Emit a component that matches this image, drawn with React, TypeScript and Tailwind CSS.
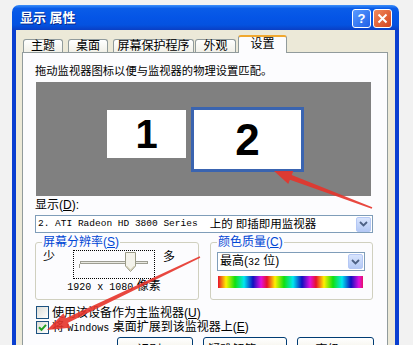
import { type FC, type ReactNode } from 'react'

const Key: FC<{ k: string }> = ({ k }) => (
  <span>
    (<span className="underline">{k}</span>)
  </span>
)

interface TabProps {
  label: string
  className: string
  active?: boolean
}

const Tab: FC<TabProps> = ({ label, className, active }) => {
  if (active) {
    return (
      <div
        className={`relative z-10 -mb-px h-[18px] border border-b-0 border-[#919b9c] border-t-2 border-t-[#f0a830] rounded-t-[3px] bg-[#fcfcfe] text-center text-[12px] leading-[13px] pt-[1px] ${className}`}
      >
        {label}
      </div>
    )
  }
  return (
    <div
      className={`h-[13px] border border-b-0 border-[#919b9c] rounded-t-[3px] bg-[linear-gradient(180deg,#ffffff,#f1f0e8)] text-center text-[12px] leading-[12px] ${className}`}
    >
      {label}
    </div>
  )
}

const ComboButton: FC = () => (
  <div className="w-[15px] h-[15px] rounded-[2px] border border-[#b5c8f5] bg-[linear-gradient(180deg,#d8e4fd,#b4c9f5)] flex items-center justify-center">
    <svg width="9" height="6" viewBox="0 0 9 6">
      <path d="M1 1 L4.5 4.5 L8 1" fill="none" stroke="#4d6185" strokeWidth="1.8" />
    </svg>
  </div>
)

const CheckBox: FC<{ checked?: boolean; children: ReactNode }> = ({ checked, children }) => (
  <div className="flex items-center h-[15px]">
    <div className="ml-[1px] w-[13px] h-[13px] border border-[#1c5180] bg-[linear-gradient(135deg,#dcdcd7,#ffffff)] flex items-center justify-center">
      {checked && (
        <svg width="9" height="9" viewBox="0 0 9 9">
          <path d="M1 4.2 L3.5 6.8 L8 1.8" fill="none" stroke="#21a121" strokeWidth="2" />
        </svg>
      )}
    </div>
    <span className="ml-[3px] text-[12px] leading-[14px]">{children}</span>
  </div>
)

const XpButton: FC<{ label: ReactNode; className: string }> = ({ label, className }) => (
  <div
    className={`h-[23px] rounded-[3px] border border-[#003c74] bg-[linear-gradient(180deg,#ffffff,#ece9d8)] text-center text-[12px] leading-[14px] pt-[5px] ${className}`}
  >
    {label}
  </div>
)

export default function App() {
  return (
    <div className="relative w-[413px] h-[345px] overflow-hidden bg-[#f2f2f2] pt-[5px] pl-[12px] font-['Liberation_Sans','Noto_Sans_CJK_SC',sans-serif] text-black">
      <div className="w-[387px] flex flex-col">
        {/* title bar */}
        <div className="h-[25px] rounded-t-[7px] bg-[linear-gradient(180deg,#3c8ffa_0%,#0a5ce8_14%,#0555e6_50%,#0452e0_80%,#0a3fc4_100%)] flex items-center justify-between pl-[8px] pr-[7px]">
          <span className="text-white font-bold text-[13px] leading-[15px] [text-shadow:1px_1px_0_#0a2a8a]">
            显示 属性
          </span>
          <div className="flex gap-[2px] mt-[2px]">
            <div className="w-[19px] h-[19px] rounded-[3px] border border-white bg-[linear-gradient(135deg,#5a9bff,#1f60e8)] flex items-center justify-center text-white font-bold text-[13px] leading-[13px]">
              ?
            </div>
            <div className="w-[19px] h-[19px] rounded-[3px] border border-white bg-[linear-gradient(135deg,#f08a5e,#d4431c)] flex items-center justify-center">
              <svg width="11" height="11" viewBox="0 0 11 11">
                <path d="M1.5 1.5 L9.5 9.5 M9.5 1.5 L1.5 9.5" stroke="#fff" strokeWidth="2" />
              </svg>
            </div>
          </div>
        </div>

        {/* body */}
        <div className="h-[400px] border-x-4 border-[#0a3fd0] bg-[#ece9d8] pl-[6px] pr-[7px] flex flex-col">
          <div className="h-[22px] flex items-end pl-[1px]">
            <Tab label="主题" className="w-[40px]" />
            <Tab label="桌面" className="ml-[5px] w-[40px]" />
            <Tab label="屏幕保护程序" className="ml-[5px] w-[81px]" />
            <Tab label="外观" className="ml-[1px] w-[41px]" />
            <Tab label="设置" className="ml-[2px] w-[49px]" active />
          </div>

          <div className="flex-1 border border-[#919b9c] bg-[#fcfcfe] pl-[12px] pr-[13px] pt-[11px] flex flex-col">
            <div className="text-[11.3px] leading-[14px]">拖动监视器图标以便与监视器的物理设置匹配。</div>

            {/* monitor arrangement */}
            <div className="mt-[4px] ml-[1px] w-[335px] h-[114px] bg-[#808080] flex items-start pl-[71px] pt-[25px]">
              <div className="mt-[3px] w-[79px] h-[48px] bg-white flex items-center justify-center font-['Liberation_Sans',sans-serif] font-bold text-[40px] leading-none">
                1
              </div>
              <div className="ml-[5px] w-[113px] h-[65px] bg-white border-[3px] border-[#3a64b0] flex items-center justify-center font-['Liberation_Sans',sans-serif] font-bold text-[44px] leading-none">
                2
              </div>
            </div>

            <div className="mt-[2px] text-[12px] leading-[14px]">
              显示<Key k="D" />:
            </div>

            <div className="mt-[3px] w-[338px] h-[18px] border border-[#7f9db9] bg-white flex items-center pl-[2px] pr-[1px]">
              <span className="font-['Liberation_Mono',monospace] text-[9.5px] leading-[14px]">2. ATI Radeon HD 3800 Series</span>
              <span className="ml-[12px] text-[11.5px] leading-[14px]">上的 即插即用监视器</span>
              <div className="ml-auto">
                <ComboButton />
              </div>
            </div>

            {/* groups */}
            <div className="mt-[3px] flex gap-[11px]">
              <fieldset className="w-[164px] h-[64px] border border-[#d0d0bf] rounded-[3px]">
                <legend className="ml-[6px] px-[1px] text-[12px] leading-[13px] text-[#0046d5]">
                  屏幕分辨率<Key k="S" />
                </legend>
                <div className="flex items-start pl-[7px] pt-[1px]">
                  <span className="mt-[1px] text-[12px] leading-[12px]">少</span>
                  <div className="relative ml-[18px] w-[82px] h-[29px] border border-dotted border-black">
                    <div className="absolute top-[10px] left-[6px] w-[68px] h-[3px] border border-[#9d9d92] bg-[#e8e8e0]" />
                    <div className="absolute top-[13px] left-[5px] w-[1px] h-[4px] bg-[#9d9d92]" />
                    <svg className="absolute top-[1px] left-[51px]" width="11" height="20" viewBox="0 0 11 20">
                      <path d="M0.5 0.5 H10.5 V14 L5.5 19.5 L0.5 14 Z" fill="#f3f2ea" stroke="#9a9a86" />
                      <path d="M1.5 14 L5.5 18.2 L9.5 14" fill="none" stroke="#c9c2a0" />
                    </svg>
                  </div>
                  <span className="ml-[8px] mt-[1px] text-[12px] leading-[12px]">多</span>
                </div>
                <div className="mt-[1px] pr-[6px] text-center text-[12px] leading-[13px]">
                  <span className="font-['Liberation_Mono',monospace] text-[10px]">1920 x 1080</span> 像素
                </div>
              </fieldset>

              <fieldset className="w-[163px] h-[64px] border border-[#d0d0bf] rounded-[3px]">
                <legend className="ml-[6px] px-[1px] text-[12px] leading-[13px] text-[#0046d5]">
                  颜色质量<Key k="C" />
                </legend>
                <div className="ml-[6px] mt-[3px] w-[148px] h-[19px] border border-[#7f9db9] bg-white flex items-center pl-[2px] pr-[1px]">
                  <span className="text-[12px] leading-[14px]">
                    最高(<span className="font-['Liberation_Mono',monospace] text-[10px]">32</span> 位)
                  </span>
                  <div className="ml-auto">
                    <ComboButton />
                  </div>
                </div>
                <div className="ml-[7px] mt-[5px] w-[145px] h-[12px] bg-[repeating-linear-gradient(90deg,#e8102a_0px,#fff000_8px,#10e010_17px,#00e8f0_26px,#1010c0_35px,#e010e0_43px,#e8102a_49px)]" />
              </fieldset>
            </div>

            <div className="mt-[5px] flex flex-col">
              <CheckBox>
                使用该设备作为主监视器<Key k="U" />
              </CheckBox>
              <CheckBox checked>
                将 <span className="font-['Liberation_Mono',monospace] text-[10px]">Windows</span> 桌面扩展到该监视器上<Key k="E" />
              </CheckBox>
            </div>

            <div className="mt-[2px] flex">
              <XpButton className="ml-[82px] w-[77px]" label={<>识别<Key k="I" /></>} />
              <XpButton className="ml-[10px] w-[85px]" label={<>疑难解答<Key k="T" />...</>} />
              <XpButton className="ml-[10px] w-[78px]" label={<>高级<Key k="V" /></>} />
            </div>
          </div>
        </div>
      </div>

      {/* red annotation arrows */}
      <svg className="absolute inset-0 pointer-events-none" width="413" height="345" viewBox="0 0 413 345">
        <polygon
          points="372.3,207.3 291.7,175.1 293.3,170.9 274,171 288.3,183.9 289.9,179.7 371.7,208.7"
          fill="#e5332a"
          opacity="0.9"
        />
        <polygon
          points="199.7,256.3 65.8,318.2 63.5,313.3 47,330 70.3,327.7 68,322.8 200.3,257.7"
          fill="#e5332a"
          opacity="0.9"
        />
      </svg>
    </div>
  )
}
